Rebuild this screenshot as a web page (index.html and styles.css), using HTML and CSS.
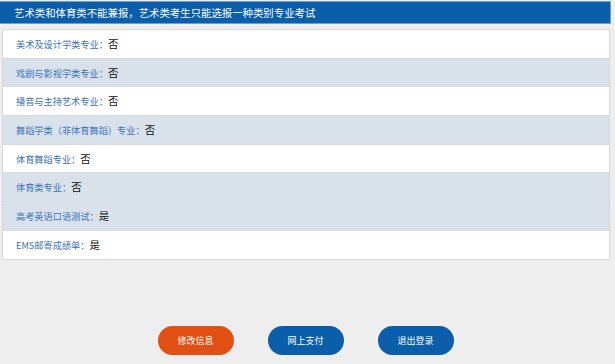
FILE: index.html
```html
<!DOCTYPE html>
<html lang="zh-CN">
<head>
    <meta charset="UTF-8">
    <meta name="viewport" content="width=device-width, initial-scale=1.0">
    <title>报考信息</title>
    <link rel="stylesheet" href="styles.css">
</head>
<body>
    <div class="page">
        <div class="title-bar">艺术类和体育类不能兼报，艺术类考生只能选报一种类别专业考试</div>
        <div class="info-table">
            <div class="row"><span class="label">美术及设计学类专业：</span><span class="value">否</span></div>
            <div class="row alt"><span class="label">戏剧与影视学类专业：</span><span class="value">否</span></div>
            <div class="row"><span class="label">播音与主持艺术专业：</span><span class="value">否</span></div>
            <div class="row alt"><span class="label">舞蹈学类（非体育舞蹈）专业：</span><span class="value">否</span></div>
            <div class="row"><span class="label">体育舞蹈专业：</span><span class="value">否</span></div>
            <div class="row alt"><span class="label">体育类专业：</span><span class="value">否</span></div>
            <div class="row alt"><span class="label">高考英语口语测试：</span><span class="value">是</span></div>
            <div class="row"><span class="label">EMS邮寄成绩单：</span><span class="value">是</span></div>
        </div>
        <div class="actions">
            <button class="btn btn-orange">修改信息</button>
            <button class="btn">网上支付</button>
            <button class="btn">退出登录</button>
        </div>
    </div>
</body>
</html>
```

FILE: styles.css
```css
body {
    margin: 0;
    padding: 0;
    background: #eeeeee;
    font-family: "Microsoft YaHei", "Noto Sans CJK SC", sans-serif;
}
.page {
    width: 611px;
}
.title-bar {
    margin-top: 1px;
    height: 21px;
    line-height: 21px;
    background: #0b5ea9;
    border: 1px solid #6f9fd0;
    border-left: none;
    color: #ffffff;
    font-size: 10.4px;
    padding-left: 14px;
}
.info-table {
    margin: 5px 1px 0 2px;
    background: #ffffff;
    border: 1px solid #d8d8d8;
}
.row {
    height: 27.7px;
    line-height: 27.7px;
    padding-left: 13px;
    border-top: 1px solid #d3d9e0;
    font-size: 9.2px;
}
.row:first-child {
    border-top: none;
}
.row.alt {
    background: #d9e2eb;
}
.label {
    color: #3b72b6;
}
.value {
    color: #111111;
    font-size: 10.5px;
}
.actions {
    display: flex;
    justify-content: center;
    gap: 34px;
    margin-top: 66px;
}
.btn {
    width: 76px;
    height: 29px;
    border: none;
    border-radius: 15px;
    background: #0b5ea9;
    color: #ffffff;
    font-family: inherit;
    font-size: 9px;
    padding: 0;
    cursor: pointer;
}
.btn-orange {
    background: #e04f13;
}
```
